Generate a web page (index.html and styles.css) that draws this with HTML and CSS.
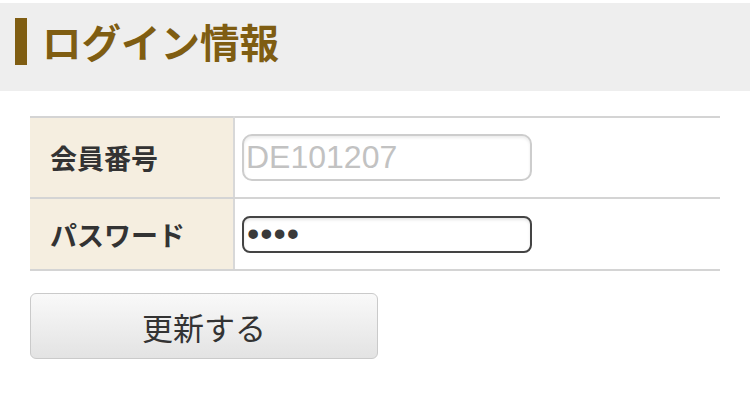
FILE: index.html
```html
<!DOCTYPE html>
<html lang="ja">
<head>
    <meta charset="UTF-8">
    <meta name="viewport" content="width=device-width, initial-scale=1.0">
    <title>ログイン情報</title>
    <link rel="stylesheet" href="styles.css">
</head>
<body>
    <div class="page-header">
        <h1 class="page-title">ログイン情報</h1>
    </div>

    <form class="login-form">
        <table class="info-table">
            <tr class="row-id">
                <th>会員番号</th>
                <td><input type="text" class="field field-disabled" placeholder="DE101207" disabled></td>
            </tr>
            <tr class="row-pass">
                <th>パスワード</th>
                <td><input type="password" class="field field-active" value="abcd"></td>
            </tr>
        </table>

        <button type="button" class="update-button">更新する</button>
    </form>
</body>
</html>
```

FILE: styles.css
```css
* {
    margin: 0;
    padding: 0;
    box-sizing: border-box;
}

body {
    font-family: "Noto Sans CJK JP", "Liberation Sans", sans-serif;
    background: #fff;
    color: #333;
    padding-top: 3px;
}

.page-header {
    background: #eeeeee;
    height: 88px;
    display: flex;
    align-items: center;
    padding-left: 15px;
}

.page-title {
    font-size: 39.5px;
    font-weight: 700;
    color: #7f5d12;
    line-height: 1;
    display: flex;
    align-items: center;
    gap: 15px;
    margin-top: -12px;
}

.page-title::before {
    content: "";
    display: block;
    width: 12px;
    height: 47px;
    background: #7f5d12;
}

.login-form {
    padding: 25px 30px 0 30px;
}

.info-table {
    width: 690px;
    border-collapse: collapse;
    border-top: 2px solid #d4d4d4;
}

.info-table th,
.info-table td {
    border-bottom: 2px solid #d4d4d4;
    vertical-align: middle;
}

.info-table th {
    width: 204px;
    background: #f5eee0;
    border-right: 2px solid #d8d8d8;
    text-align: left;
    padding-left: 20px;
    font-size: 27px;
    font-weight: 700;
    color: #333;
}

.info-table td {
    padding-left: 7px;
}

.row-id th,
.row-id td {
    height: 81px;
}

.row-pass th,
.row-pass td {
    height: 72px;
}

.field {
    width: 290px;
    background: #fff;
    font-family: "Liberation Sans", sans-serif;
    outline: none;
}

.field-disabled {
    height: 47px;
    border: 2px solid #cdcdcd;
    border-radius: 10px;
    padding: 0 2px;
    font-size: 32px;
    box-shadow: inset 0 2px 3px rgba(0, 0, 0, 0.08);
}

.field-disabled::placeholder {
    color: #c2c2c2;
}

.field-active {
    height: 37px;
    border: 2px solid #444;
    border-radius: 8px;
    padding: 0 3px;
    font-size: 35px;
    color: #3a3a3a;
    letter-spacing: 1px;
    box-shadow: inset 0 2px 3px rgba(0, 0, 0, 0.1);
}

.update-button {
    display: block;
    margin-top: 22px;
    width: 348px;
    height: 66px;
    border: 1px solid #cacaca;
    border-radius: 6px;
    background: linear-gradient(#f9f9f9, #e3e3e3);
    font-family: "Noto Sans CJK JP", sans-serif;
    font-size: 31px;
    color: #333;
    cursor: pointer;
}
```
